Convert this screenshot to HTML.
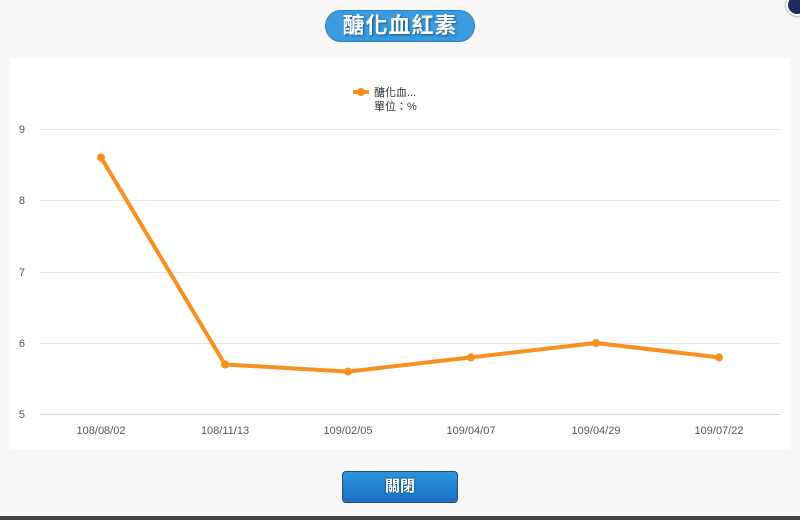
<!DOCTYPE html>
<html><head><meta charset="utf-8"><style>
body{margin:0;width:800px;height:520px;background:#f7f7f7;position:relative;overflow:hidden;font-family:"Liberation Sans","Noto Sans CJK TC",sans-serif}
.title{position:absolute;left:325px;top:10px;width:150px;height:32px;border-radius:16px;background:#3a9be0;border:1px solid #2a7fc0;box-sizing:border-box;color:#fff;font-size:22px;font-weight:bold;text-align:center;line-height:30px;text-shadow:1px 1px 2px #1a4f80;letter-spacing:1px}
.panel{position:absolute;left:10px;top:58px;width:780px;height:391px;background:#fff}
.btn{position:absolute;left:342px;top:471px;width:116px;height:32px;border-radius:4px;background:linear-gradient(#2a95df,#1a6fc0);border:1px solid #1a4f80;box-sizing:border-box;color:#fff;font-size:15px;font-weight:bold;text-align:center;line-height:30px;text-shadow:0 0 2px #103a60}
.bar{position:absolute;left:0;top:516px;width:800px;height:4px;background:#444}
.close{position:absolute;left:786px;top:-6px;width:18px;height:18px;border-radius:50%;background:#1c2a5e;border:2px solid #fff;box-shadow:0 0 2px #555}
</style></head><body>
<div class="title">醣化血紅素</div>
<div class="close"></div>
<div class="panel"></div>
<svg style="position:absolute;left:0;top:0" width="800" height="520" font-family="Liberation Sans, Noto Sans CJK TC, sans-serif">
<g stroke="#e6e6e6" stroke-width="1">
<line x1="40" y1="129.5" x2="780" y2="129.5"/><line x1="40" y1="200.5" x2="780" y2="200.5"/><line x1="40" y1="272.5" x2="780" y2="272.5"/><line x1="40" y1="343.5" x2="780" y2="343.5"/>
</g>
<line x1="40" y1="414.5" x2="780" y2="414.5" stroke="#ccd6eb"/>
<g font-size="11" fill="#555" text-anchor="end"><text x="25" y="133">9</text><text x="25" y="204">8</text><text x="25" y="276">7</text><text x="25" y="347">6</text><text x="25" y="418">5</text></g>
<g font-size="11" fill="#555" text-anchor="middle"><text x="101" y="434">108/08/02</text><text x="225" y="434">108/11/13</text><text x="348" y="434">109/02/05</text><text x="471" y="434">109/04/07</text><text x="596" y="434">109/04/29</text><text x="719" y="434">109/07/22</text></g>
<polyline fill="none" stroke="#f7901e" stroke-width="4" stroke-linejoin="round" points="101,157.5 225,364.5 348,371.6 471,357.4 596,343 719,357.4"/>
<g fill="#f7901e"><circle cx="101" cy="157.5" r="4"/><circle cx="225" cy="364.5" r="4"/><circle cx="348" cy="371.6" r="4"/><circle cx="471" cy="357.4" r="4"/><circle cx="596" cy="343" r="4"/><circle cx="719" cy="357.4" r="4"/></g>
<line x1="353" y1="92" x2="369" y2="92" stroke="#f7901e" stroke-width="4"/><circle cx="361" cy="92" r="4" fill="#f7901e"/>
<g font-size="11" fill="#333"><text x="374" y="96">醣化血...</text><text x="374" y="110">單位：%</text></g>
</svg>
<div class="btn">關閉</div>
<div class="bar"></div>
</body></html>
